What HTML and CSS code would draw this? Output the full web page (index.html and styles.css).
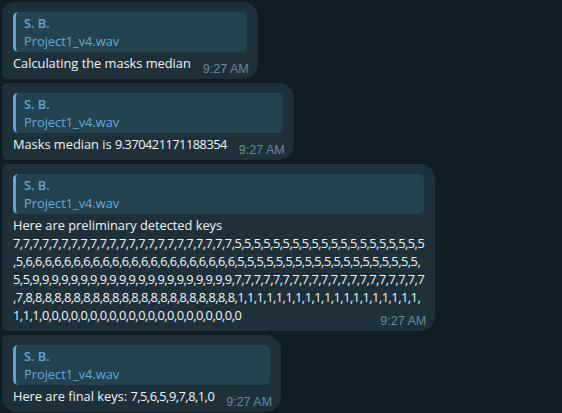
FILE: index.html
```html
<!DOCTYPE html>
<html>
<head>
<meta charset="utf-8">
<link rel="stylesheet" href="styles.css">
</head>
<body>
<div class="chat">
  <div class="msg first">
    <div class="reply"><div class="name">S. B.</div><div class="file">Project1_v4.wav</div></div>
    <p class="text">Calculating the masks median<span class="time">9:27 AM</span></p>
  </div>
  <div class="msg">
    <div class="reply"><div class="name">S. B.</div><div class="file">Project1_v4.wav</div></div>
    <p class="text">Masks median is <span class="num">9.370421171188354</span><span class="time">9:27 AM</span></p>
  </div>
  <div class="msg">
    <div class="reply"><div class="name">S. B.</div><div class="file">Project1_v4.wav</div></div>
    <p class="text">Here are preliminary detected keys<br><span class="num">7,7,7,7,7,7,7,7,7,7,7,7,7,7,7,7,7,7,7,7,7,7,7,5,5,5,5,5,5,5,5,5,5,5,5,5,5,5,5,5,5,5,5<br>,5,6,6,6,6,6,6,6,6,6,6,6,6,6,6,6,6,6,6,6,6,6,6,5,5,5,5,5,5,5,5,5,5,5,5,5,5,5,5,5,5,5,<br>5,5,9,9,9,9,9,9,9,9,9,9,9,9,9,9,9,9,9,9,9,9,9,7,7,7,7,7,7,7,7,7,7,7,7,7,7,7,7,7,7,7,7<br>,7,8,8,8,8,8,8,8,8,8,8,8,8,8,8,8,8,8,8,8,8,8,8,1,1,1,1,1,1,1,1,1,1,1,1,1,1,1,1,1,1,1,<br>1,1,1,0,0,0,0,0,0,0,0,0,0,0,0,0,0,0,0,0,0,0,0,0</span><span class="time">9:27 AM</span></p>
  </div>
  <div class="msg last">
    <div class="reply"><div class="name">S. B.</div><div class="file">Project1_v4.wav</div></div>
    <p class="text">Here are final keys: <span class="num">7,5,6,5,9,7,8,1,0</span><span class="time">9:27 AM</span></p>
  </div>
</div>
</body>
</html>
```

FILE: styles.css
```css
html, body {
  margin: 0;
  padding: 0;
  background: #0f1d25;
  height: 100%;
  overflow: hidden;
}

.chat {
  display: flex;
  flex-direction: column;
  align-items: flex-start;
  gap: 4px;
  padding: 2px;
  font-family: "Open Sans", "Noto Sans", sans-serif;
  font-size: 12.8px;
  line-height: 18px;
  color: #f2f4f5;
}

.msg {
  background: #1e313b;
  padding: 10px 11px 1px 11px;
  border-radius: 5px 15px 15px 5px;
}

.msg.first {
  border-radius: 12px 15px 15px 5px;
}

.msg.last {
  border-radius: 5px 15px 15px 15px;
}

.reply {
  background: #25424f;
  border-left: 3px solid #5aa6e0;
  border-radius: 5px;
  padding: 2px 8px;
}

.name {
  font-weight: 600;
  color: #5ea6da;
}

.file {
  color: #63aade;
}

.text {
  margin: 2px 0 0 0;
  display: flow-root;
}

.num {
  letter-spacing: -0.5px;
}

.time {
  float: right;
  margin: 6px -2px 0 12px;
  font-family: "Liberation Sans", Arial, sans-serif;
  font-size: 12.5px;
  line-height: 18px;
  color: #6d8898;
}
```
